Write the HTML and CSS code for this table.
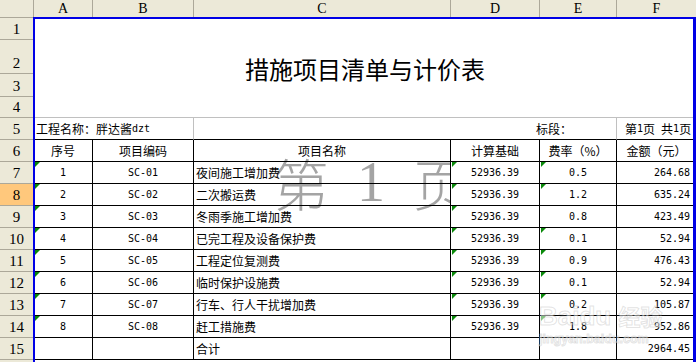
FILE: index.html
```html
<!DOCTYPE html>
<html lang="zh-CN">
<head>
<meta charset="utf-8">
<title>措施项目清单与计价表</title>
<link rel="stylesheet" href="styles.css">
</head>
<body>
<div class="app">
  <div class="colhead">
    <div class="corner"></div>
    <div>A</div><div>B</div><div>C</div><div>D</div><div>E</div><div class="last">F</div>
  </div>
  <div class="main">
    <div class="rowhead">
      <div class="rh">1</div>
      <div class="rh r2">2</div>
      <div class="rh r3">3</div>
      <div class="rh r4">4</div>
      <div class="rh">5</div>
      <div class="rh">6</div>
      <div class="rh">7</div>
      <div class="rh act">8</div>
      <div class="rh">9</div>
      <div class="rh">10</div>
      <div class="rh">11</div>
      <div class="rh">12</div>
      <div class="rh">13</div>
      <div class="rh">14</div>
      <div class="rh">15</div>
      <div class="rh"></div>
    </div>
    <div class="sheet">
      <div class="wm"><div class="wm-in"><span>第</span><span class="wm-n">1</span><span>页</span></div></div>

      <div class="c title">措施项目清单与计价表</div>

      <div class="c proj">工程名称：胖达酱<span class="m">dzt</span></div>
      <div class="c sect">标段：</div>
      <div class="c page">第<span class="m">1</span>页<span class="m">&nbsp;</span>共<span class="m">1</span>页</div>

      <div class="c">序号</div>
      <div class="c">项目编码</div>
      <div class="c">项目名称</div>
      <div class="c">计算基础</div>
      <div class="c">费率（%）</div>
      <div class="c fl">金额（元）</div>

      <div class="c m t">1</div><div class="c m">SC-01</div><div class="c l">夜间施工增加费</div><div class="c m t">52936.39</div><div class="c m t">0.5</div><div class="c m r">264.68</div>
      <div class="c m t">2</div><div class="c m">SC-02</div><div class="c l">二次搬运费</div><div class="c m t">52936.39</div><div class="c m t">1.2</div><div class="c m r">635.24</div>
      <div class="c m t">3</div><div class="c m">SC-03</div><div class="c l">冬雨季施工增加费</div><div class="c m t">52936.39</div><div class="c m">0.8</div><div class="c m r">423.49</div>
      <div class="c m t">4</div><div class="c m">SC-04</div><div class="c l">已完工程及设备保护费</div><div class="c m t">52936.39</div><div class="c m t">0.1</div><div class="c m r">52.94</div>
      <div class="c m t">5</div><div class="c m">SC-05</div><div class="c l">工程定位复测费</div><div class="c m t">52936.39</div><div class="c m t">0.9</div><div class="c m r">476.43</div>
      <div class="c m t">6</div><div class="c m">SC-06</div><div class="c l">临时保护设施费</div><div class="c m t">52936.39</div><div class="c m t">0.1</div><div class="c m r">52.94</div>
      <div class="c m t">7</div><div class="c m">SC-07</div><div class="c l">行车、行人干扰增加费</div><div class="c m t">52936.39</div><div class="c m t">0.2</div><div class="c m r">105.87</div>
      <div class="c m t">8</div><div class="c m">SC-08</div><div class="c l">赶工措施费</div><div class="c m t">52936.39</div><div class="c m t">1.8</div><div class="c m r">952.86</div>
      <div class="c"></div><div class="c"></div><div class="c l">合计</div><div class="c"></div><div class="c"></div><div class="c m r">2964.45</div>

      <div class="bd">
        <div class="bd1">Baidu <span class="bd-cn">经验</span></div>
        <div class="bd2">jingyan.baidu.com</div>
      </div>
      <div class="sel"></div>
    </div>
  </div>
</div>
</body>
</html>
```

FILE: styles.css
```css
body {
  margin: 0;
  background: #fff;
}

.app {
  width: 696px;
  height: 362px;
  overflow: hidden;
  background: #fff;
  color: #000;
  font-family: "Noto Sans CJK SC", sans-serif;
  font-size: 12px;
}

/* column header */
.colhead {
  display: grid;
  grid-template-columns: 34px 59px 101px 257px 89px 77px 79px;
  height: 18px;
}
.colhead > div {
  box-sizing: border-box;
  background: #ECE9D8;
  border-right: 1px solid #ACA899;
  border-bottom: 1px solid #ACA899;
  display: flex;
  align-items: center;
  justify-content: center;
  font-family: "Liberation Serif", serif;
  font-size: 14px;
  line-height: 1;
}
.colhead > .last {
  border-right: none;
}

.main {
  display: flex;
}

/* row header */
.rowhead {
  width: 34px;
  flex: none;
  display: flex;
  flex-direction: column;
}
.rh {
  box-sizing: border-box;
  flex: none;
  height: 22px;
  background: #ECE9D8;
  border-right: 1px solid #ACA899;
  border-bottom: 1px solid #ACA899;
  display: flex;
  align-items: flex-end;
  justify-content: center;
  padding-bottom: 2px;
  font-family: "Liberation Serif", serif;
  font-size: 15px;
  line-height: 1;
}
.rh.r2 { height: 34px; }
.rh.r3 { height: 23px; }
.rh.r4 { height: 21px; }
.rh.act { background: #FFC87C; }

/* sheet */
.sheet {
  position: relative;
  flex: none;
  display: grid;
  grid-template-columns: 59px 101px 257px 89px 77px 79px;
  grid-template-rows: 100px repeat(11, 22px);
}

.c {
  position: relative;
  box-sizing: border-box;
  border-right: 1px solid #000;
  border-bottom: 1px solid #000;
  display: flex;
  align-items: center;
  justify-content: center;
  white-space: nowrap;
  overflow: visible;
}
.c.l { justify-content: flex-start; padding-left: 2px; }
.c.r { justify-content: flex-end; padding-right: 5px; }
.c.fl { border-right: none; }

.m {
  font-family: "DejaVu Sans Mono", "Liberation Mono", monospace;
  font-size: 10px;
}

.title {
  grid-column: 1 / -1;
  border-right: none;
  border-bottom: 1px solid #C0C0C0;
  font-size: 24px;
  padding-top: 2px;
}
.proj {
  grid-column: span 2;
  border-right-color: #C0C0C0;
  justify-content: flex-start;
  padding-left: 2px;
}
.sect {
  grid-column: span 3;
  border-right-color: #C0C0C0;
  justify-content: flex-end;
  padding-right: 44px;
}
.page {
  border-right: none;
  justify-content: flex-start;
  padding-left: 8px;
}

/* green error-indicator triangles */
.t::before {
  content: "";
  position: absolute;
  left: 1px;
  top: 0;
  border-top: 5px solid #0A8A0A;
  border-right: 5px solid transparent;
}

/* page watermark */
.wm {
  position: absolute;
  left: 0;
  top: 133px;
  width: 416px;
  height: 62px;
  overflow: hidden;
  pointer-events: none;
}
.wm-in {
  display: flex;
  gap: 28px;
  padding-left: 239px;
  font-family: "Noto Sans CJK SC", sans-serif;
  font-weight: 300;
  font-size: 56px;
  line-height: 62px;
  color: #A4A4A4;
  white-space: nowrap;
}
.wm-n {
  width: 28px;
  text-align: center;
  font-family: "Liberation Serif", serif;
}

/* baidu watermark */
.bd {
  position: absolute;
  left: 505px;
  top: 283px;
  z-index: 1;
  pointer-events: none;
  color: rgba(255, 255, 255, 0.5);
  -webkit-text-stroke: 1px rgba(160, 160, 160, 0.3);
  font-family: "Liberation Sans", sans-serif;
  font-weight: bold;
  white-space: nowrap;
}
.bd1 {
  font-size: 26px;
  line-height: 28px;
}
.bd-cn {
  font-family: "Noto Sans CJK SC", sans-serif;
  font-size: 22px;
}
.bd2 {
  font-size: 12.5px;
  line-height: 16px;
  margin-top: 1px;
}

/* selection outline */
.sel {
  position: absolute;
  left: -1px;
  top: -1px;
  right: 0;
  bottom: -2px;
  border-style: solid;
  border-color: #0000E6;
  border-width: 2px 3px 4px 2px;
  pointer-events: none;
  z-index: 2;
}
```
